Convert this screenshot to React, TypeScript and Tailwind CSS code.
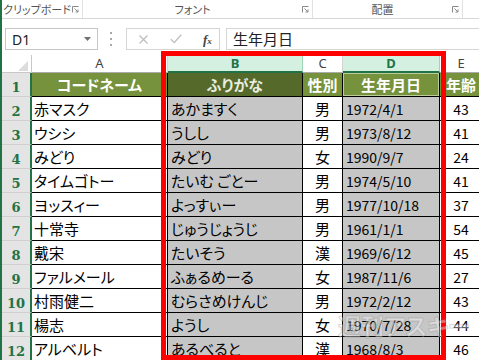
import React from "react";

const rows: [string, string, string, string, string][] = [
  ["赤マスク", "あかますく", "男", "1972/4/1", "43"],
  ["ウシシ", "うしし", "男", "1973/8/12", "41"],
  ["みどり", "みどり", "女", "1990/9/7", "24"],
  ["タイムゴトー", "たいむ ごとー", "男", "1974/5/10", "41"],
  ["ヨッスィー", "よっすぃー", "男", "1977/10/18", "37"],
  ["十常寺", "じゅうじょうじ", "男", "1961/1/1", "54"],
  ["戴宋", "たいそう", "漢", "1969/6/12", "45"],
  ["ファルメール", "ふぁるめーる", "女", "1987/11/6", "27"],
  ["村雨健二", "むらさめけんじ", "男", "1972/2/12", "43"],
  ["楊志", "ようし", "女", "1970/7/28", "44"],
  ["アルベルト", "あるべると", "漢", "1968/8/3", "46"],
];

const cols = "grid grid-cols-[30px_136px_135px_40px_97px_42px]";
const jp = "font-['Noto_Sans_CJK_JP',sans-serif] [font-feature-settings:'palt']";

function Launcher() {
  return (
    <svg width="7" height="7" viewBox="0 0 7 7" className="mr-[3px] shrink-0">
      <path d="M0.5 6.5V0.5H6.5" fill="none" stroke="#8a8a8a" strokeWidth="1" />
      <path d="M2.5 2.5L6 6M6 3.5V6H3.5" fill="none" stroke="#8a8a8a" strokeWidth="1" />
    </svg>
  );
}

function RowHead({ n }: { n: number }) {
  return (
    <div className="flex items-end justify-center pb-[2px] bg-[#e4e4e4] border-b border-[#cfcfcf] border-r-2 border-r-[#217346] text-[#217346] font-bold text-[13px] leading-none font-['DejaVu_Serif',serif]">
      {n}
    </div>
  );
}

export default function App() {
  return (
    <div className="relative w-[479px] h-[360px] overflow-hidden bg-white border-l-2 border-[#217346]">
      {/* Ribbon group labels */}
      <div className={`flex h-[19px] border-b border-[#d8d8d8] text-[11px] leading-none text-[#555] ${jp}`}>
        <div className="w-[81px] flex items-center border-r border-[#e1e1e1]">
          <span className="flex-1 text-center">クリップボード</span>
          <Launcher />
        </div>
        <div className="w-[230px] flex items-center border-r border-[#e1e1e1]">
          <span className="flex-1 text-center">フォント</span>
          <Launcher />
        </div>
        <div className="w-[150px] flex items-center border-r border-[#e1e1e1]">
          <span className="flex-1 text-center">配置</span>
          <Launcher />
        </div>
        <div className="flex-1" />
      </div>

      {/* Formula bar */}
      <div className="flex h-[36px] items-start pt-[9px]">
        <div className="ml-[3px] w-[93px] h-[22px] border border-[#c6c6c6] flex items-center pl-[6px] text-[14px] text-[#222] font-['Noto_Sans',sans-serif]">
          <span>D1</span>
          <svg width="7" height="4" viewBox="0 0 7 4" className="ml-auto mr-[6px]">
            <path d="M0 0H7L3.5 4Z" fill="#6f6f6f" />
          </svg>
        </div>
        <svg width="2" height="14" viewBox="0 0 2 14" className="ml-[12px] mt-[4px]">
          <rect x="0" y="0" width="2" height="2" fill="#a8a8a8" />
          <rect x="0" y="6" width="2" height="2" fill="#a8a8a8" />
          <rect x="0" y="12" width="2" height="2" fill="#a8a8a8" />
        </svg>
        <div className="ml-[14px] w-[94px] h-[22px] border border-[#d5d5d5] flex items-center">
          <svg width="9" height="9" viewBox="0 0 9 9" className="ml-[12px]">
            <path d="M0.5 0.5L8.5 8.5M8.5 0.5L0.5 8.5" stroke="#bdbdbd" strokeWidth="1.2" />
          </svg>
          <svg width="12" height="10" viewBox="0 0 12 10" className="ml-[22px]">
            <path d="M0.8 5.2L4.3 8.6L11.2 0.8" fill="none" stroke="#bdbdbd" strokeWidth="1.3" />
          </svg>
          <span className="ml-[21px] text-[13px] italic font-bold text-[#444] font-['Liberation_Serif',serif] leading-none">
            f<span className="text-[9px]">x</span>
          </span>
        </div>
        <div className={`ml-[6px] flex-1 h-[22px] border border-r-0 border-[#d5d5d5] flex items-center pl-[6px] text-[15px] text-[#222] ${jp}`}>
          生年月日
        </div>
      </div>

      {/* Column headers */}
      <div className={`${cols} h-[18px] text-[13px] leading-none font-['Noto_Sans',sans-serif]`}>
        <div className="relative border-r border-b border-[#c8c8c8] bg-white">
          <svg width="10" height="10" viewBox="0 0 10 10" className="absolute right-[3px] bottom-[1px]">
            <path d="M10 0V10H0Z" fill="#dcdcdc" />
          </svg>
        </div>
        <div className="flex items-center justify-center border-r border-b border-r-[#d4d4d4] border-b-[#ababab] text-[#444]">A</div>
        <div className="flex items-center justify-center bg-[#d3f0e0] border-r border-r-[#9fd5b7] border-b-2 border-b-[#217346] text-[#217346] font-bold">B</div>
        <div className="flex items-center justify-center border-r border-b border-r-[#d4d4d4] border-b-[#ababab] text-[#444]">C</div>
        <div className="flex items-center justify-center bg-[#d3f0e0] border-r border-r-[#9fd5b7] border-b-2 border-b-[#217346] text-[#217346] font-bold">D</div>
        <div className="flex items-center justify-center border-b border-b-[#ababab] text-[#444]">E</div>
      </div>

      {/* Header row 1 */}
      <div className={`${cols} h-[24px]`}>
        <RowHead n={1} />
        <div className={`flex items-center justify-center bg-[#76923c] border-r border-b border-black text-white font-bold text-[15px] leading-none ${jp}`}>コードネーム</div>
        <div className={`flex items-center justify-center bg-[#55692b] border-r border-b border-black text-[#e9ecdf] font-bold text-[15px] leading-none ${jp}`}>ふりがな</div>
        <div className={`flex items-center justify-center bg-[#76923c] border-r border-b border-black text-white font-bold text-[15px] leading-none ${jp}`}>性別</div>
        <div className={`flex items-center justify-center bg-[#76923c] border-r border-b border-black shadow-[inset_0_0_0_1px_#b9cc9a] text-white font-bold text-[15px] leading-none ${jp}`}>生年月日</div>
        <div className={`flex items-center justify-center bg-[#76923c] border-b border-black text-white font-bold text-[15px] leading-none ${jp}`}>年齢</div>
      </div>

      {/* Data rows */}
      {rows.map((r, i) => (
        <div key={i} className={`${cols} h-[24px] text-[15px] leading-none text-black ${jp}`}>
          <RowHead n={i + 2} />
          <div className="flex items-center pl-[2px] bg-white border-r border-b border-black whitespace-nowrap overflow-hidden">{r[0]}</div>
          <div className="flex items-center pl-[3px] bg-[#c6c6c6] border-r border-b border-black whitespace-nowrap overflow-hidden">{r[1]}</div>
          <div className="flex items-center justify-center bg-white border-r border-b border-black">{r[2]}</div>
          <div className="flex items-center pl-[3px] bg-[#c6c6c6] border-r border-b border-black text-[14px] whitespace-nowrap">{r[3]}</div>
          <div className="flex items-center justify-center bg-white border-b border-black text-[14px]">{r[4]}</div>
        </div>
      ))}

      {/* Red highlight box */}
      <div className="absolute left-[159px] top-[51px] w-[285px] h-[309px] border-[5px] border-[#ff0000] pointer-events-none" />

      {/* Watermark */}
      <div className={`absolute left-[336px] top-[314px] text-[23px] font-bold leading-none text-white/40 [-webkit-text-stroke:1px_rgba(120,120,120,0.3)] pointer-events-none ${jp}`}>
        週刊アスキー
      </div>
    </div>
  );
}
